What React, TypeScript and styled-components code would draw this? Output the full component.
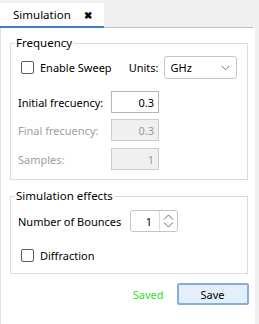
import styled, { createGlobalStyle } from "styled-components"

const GlobalStyle = createGlobalStyle`
  html, body {
    margin: 0;
    padding: 0;
    background: #ffffff;
  }
  body {
    font-family: "Noto Sans", "Liberation Sans", sans-serif;
    font-size: 11px;
    color: #000;
  }
`

const Window = styled.div`
  width: 259px;
  height: 324px;
  display: flex;
  flex-direction: column;
  overflow: hidden;
`

const TabBar = styled.div`
  height: 28px;
  display: flex;
  align-items: flex-end;
  background: #f0f0f0;
`

const Tab = styled.div`
  width: 104px;
  height: 25px;
  box-sizing: border-box;
  display: flex;
  align-items: center;
  padding-left: 13px;
  gap: 13px;
  background: #fff;
  border-bottom: 2px solid #3d7fc5;
  font-size: 11.5px;
`

const CloseMark = styled.span`
  font-size: 10px;
  font-weight: 700;
  line-height: 1;
`

const TabFill = styled.div`
  flex: 1;
  height: 1px;
  background: #c4c4c4;
  margin-right: 6px;
`

const Body = styled.div`
  flex: 1;
  display: flex;
`

const Content = styled.div`
  flex: 1;
  background: #fff;
  border-left: 1px solid #cfe3f6;
  padding: 7px 7px 0 9px;
  display: flex;
  flex-direction: column;
  gap: 8px;
`

const SideStrip = styled.div`
  width: 6px;
  background: #f0f0f0;
`

const Group = styled.fieldset<{ $bottom?: number }>`
  margin: 0;
  padding: 0 10px ${(p) => p.$bottom ?? 8}px 7px;
  min-width: 0;
  border: 1px solid #dcdcdc;
  display: flex;
  flex-direction: column;
`

const Legend = styled.legend`
  margin-left: -3px;
  padding: 0 1px;
  line-height: 16px;
  font-size: 11.5px;
`

const Row = styled.div<{ $top?: number }>`
  display: flex;
  align-items: center;
  margin-top: ${(p) => p.$top ?? 0}px;
  white-space: nowrap;
`

const CheckLabel = styled.label`
  display: flex;
  align-items: center;
  gap: 6px;
  padding-left: 3px;
  white-space: nowrap;
`

const Box = styled.span`
  width: 13px;
  height: 13px;
  box-sizing: border-box;
  border: 1px solid #5b5b5b;
  border-radius: 2px;
  background: #fff;
`

const FieldLabel = styled.span<{ $disabled?: boolean; $width?: number }>`
  width: ${(p) => p.$width ?? 93}px;
  color: ${(p) => (p.$disabled ? "#a0a0a0" : "#000")};
  white-space: nowrap;
`

const NumberBox = styled.div<{ $disabled?: boolean }>`
  width: 48px;
  height: 22px;
  box-sizing: border-box;
  border: 1px solid ${(p) => (p.$disabled ? "#cccccc" : "#b6b6b6")};
  background: ${(p) => (p.$disabled ? "#f0f0f0" : "#fff")};
  color: ${(p) => (p.$disabled ? "#9a9a9a" : "#000")};
  display: flex;
  align-items: center;
  justify-content: flex-end;
  padding-right: 4px;
`

const UnitsLabel = styled.span`
  margin-left: 17px;
  margin-right: 5px;
`

const Select = styled.div`
  width: 73px;
  height: 23px;
  box-sizing: border-box;
  border: 1px solid #c4c4c4;
  border-radius: 3px;
  display: flex;
  align-items: center;
  justify-content: space-between;
  padding: 0 6px 0 6px;
`

const Spinner = styled.div`
  width: 48px;
  height: 22px;
  box-sizing: border-box;
  border: 1px solid #c4c4c4;
  border-radius: 3px;
  display: flex;
`

const SpinValue = styled.div`
  flex: 1;
  display: flex;
  align-items: center;
  justify-content: flex-end;
  padding-right: 7px;
  border-right: 1px solid #dcdcdc;
`

const SpinArrows = styled.div`
  width: 17px;
  display: flex;
  align-items: center;
  justify-content: center;
`

const Footer = styled.div`
  display: flex;
  align-items: center;
  justify-content: flex-end;
  gap: 13px;
  margin-top: 1px;
  margin-right: -1px;
`

const Status = styled.span`
  color: #22e622;
`

const SaveButton = styled.button`
  width: 72px;
  height: 22px;
  box-sizing: border-box;
  border: 2px solid #86afdf;
  border-radius: 2px;
  background: #e3effa;
  font: inherit;
  color: #000;
  padding: 0;
`

export default function App() {
  return (
    <Window>
      <GlobalStyle />
      <TabBar>
        <Tab>
          <span>Simulation</span>
          <CloseMark>✖</CloseMark>
        </Tab>
        <TabFill />
      </TabBar>
      <Body>
        <Content>
          <Group $bottom={9}>
            <Legend>Frequency</Legend>
            <Row $top={5}>
              <CheckLabel>
                <Box />
                Enable Sweep
              </CheckLabel>
              <UnitsLabel>Units:</UnitsLabel>
              <Select>
                <span>GHz</span>
                <svg width="9" height="6" viewBox="0 0 9 6">
                  <path d="M0.5 0.8 L4.5 4.8 L8.5 0.8" fill="none" stroke="#777" strokeWidth="1" />
                </svg>
              </Select>
            </Row>
            <Row $top={12}>
              <FieldLabel>Initial frecuency:</FieldLabel>
              <NumberBox>0.3</NumberBox>
            </Row>
            <Row $top={6}>
              <FieldLabel $disabled>Final frecuency:</FieldLabel>
              <NumberBox $disabled>0.3</NumberBox>
            </Row>
            <Row $top={7}>
              <FieldLabel $disabled>Samples:</FieldLabel>
              <NumberBox $disabled>1</NumberBox>
            </Row>
          </Group>
          <Group $bottom={10}>
            <Legend>Simulation effects</Legend>
            <Row $top={6}>
              <FieldLabel $width={112}>Number of Bounces</FieldLabel>
              <Spinner>
                <SpinValue>1</SpinValue>
                <SpinArrows>
                  <svg width="11" height="14" viewBox="0 0 11 14">
                    <path d="M1 5.5 L5.5 1 L10 5.5 M1 8.5 L5.5 13 L10 8.5" fill="none" stroke="#666" strokeWidth="1" />
                  </svg>
                </SpinArrows>
              </Spinner>
            </Row>
            <Row $top={16}>
              <CheckLabel>
                <Box />
                Diffraction
              </CheckLabel>
            </Row>
          </Group>
          <Footer>
            <Status>Saved</Status>
            <SaveButton>Save</SaveButton>
          </Footer>
        </Content>
        <SideStrip />
      </Body>
    </Window>
  )
}
